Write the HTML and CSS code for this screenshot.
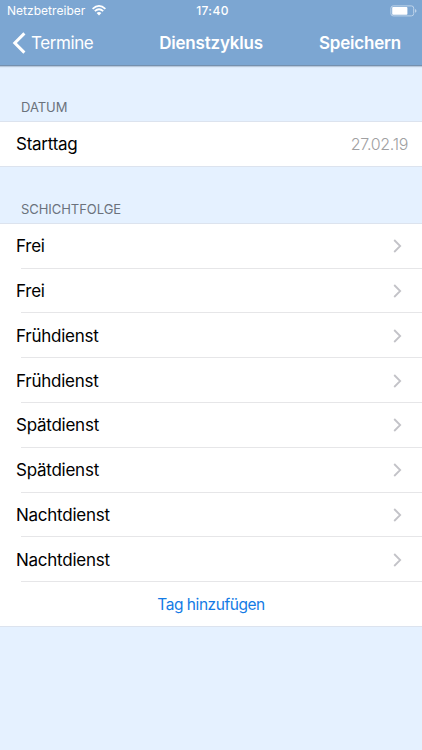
FILE: index.html
```
<!DOCTYPE html>
<html lang="de">
<head>
<meta charset="utf-8">
<title>Dienstzyklus</title>
<link rel="stylesheet" href="styles.css">
</head>
<body>
<header class="header">
  <div class="status">
    <div class="carrier"><span>Netzbetreiber</span>
      <svg class="wifi" width="14" height="11" viewBox="0 0 14 11"><path d="M.6 3.9Q7-2 13.4 3.9M2.8 6.2Q7 2.3 11.2 6.2" fill="none" stroke="#fff" stroke-width="1.7"/><path d="M4.6 8Q7 5.9 9.4 8L7 10.4z" fill="#fff"/></svg>
    </div>
    <span class="time">17:40</span>
    <svg class="battery" width="27" height="12" viewBox="0 0 27 12"><rect x=".9" y=".9" width="22.8" height="10" rx="2.3" fill="none" stroke="#bfd4ea"/><rect x="2.2" y="2.1" width="15.2" height="7.6" rx=".8" fill="#fff"/><path d="M25 4.1q1.5.5 1.5 1.8t-1.5 1.8z" fill="#bfd4ea"/></svg>
  </div>
  <nav class="nav">
    <div class="back"><svg width="14" height="22" viewBox="0 0 14 22"><path d="M12.4 1.4L2.8 11l9.6 9.6" fill="none" stroke="#fff" stroke-width="3"/></svg><span>Termine</span></div>
    <h1 class="title">Dienstzyklus</h1>
    <div class="save"><span>Speichern</span></div>
  </nav>
</header>
<main>
  <h2 class="section first">DATUM</h2>
  <div class="list">
    <div class="row single"><span>Starttag</span><span class="date">27.02.19</span></div>
  </div>
  <h2 class="section">SCHICHTFOLGE</h2>
  <div class="list">
    <div class="row"><span>Frei</span><svg class="chev" viewBox="0 0 9 14"><path d="M1.2 1l6 6-6 6"/></svg></div>
    <div class="row"><span>Frei</span><svg class="chev" viewBox="0 0 9 14"><path d="M1.2 1l6 6-6 6"/></svg></div>
    <div class="row"><span>Frühdienst</span><svg class="chev" viewBox="0 0 9 14"><path d="M1.2 1l6 6-6 6"/></svg></div>
    <div class="row"><span>Frühdienst</span><svg class="chev" viewBox="0 0 9 14"><path d="M1.2 1l6 6-6 6"/></svg></div>
    <div class="row"><span>Spätdienst</span><svg class="chev" viewBox="0 0 9 14"><path d="M1.2 1l6 6-6 6"/></svg></div>
    <div class="row"><span>Spätdienst</span><svg class="chev" viewBox="0 0 9 14"><path d="M1.2 1l6 6-6 6"/></svg></div>
    <div class="row"><span>Nachtdienst</span><svg class="chev" viewBox="0 0 9 14"><path d="M1.2 1l6 6-6 6"/></svg></div>
    <div class="row"><span>Nachtdienst</span><svg class="chev" viewBox="0 0 9 14"><path d="M1.2 1l6 6-6 6"/></svg></div>
    <div class="row add"><span>Tag hinzufügen</span></div>
  </div>
</main>
</body>
</html>
```
FILE: styles.css
```
* { box-sizing: border-box; }
body {
  margin: 0;
  height: 750px;
  overflow: hidden;
  background: #e5f1ff;
  font-family: Inter, "Liberation Sans", sans-serif;
  font-size: 17px;
  letter-spacing: -0.25px;
  color: #000;
}
svg { display: block; flex: none; }
.header {
  height: 66px;
  background: #7ca6d2;
  border-bottom: 1px solid #7590ae;
  box-shadow: 0 1px 1px #b9c8da;
  color: #fff;
}
.status, .nav {
  display: grid;
  grid-template-columns: 1fr auto 1fr;
  align-items: center;
}
.status { height: 21px; padding: 0 5px; font-size: 12px; }
.carrier { display: flex; align-items: center; gap: 7px; padding-left: 2px; letter-spacing: 0.03px; }
.time { padding-left: 3px; font-weight: 500; letter-spacing: 0.4px; }
.battery { justify-self: end; }
.nav { height: 44px; padding: 0 12px; }
.back { display: flex; align-items: center; gap: 5px; letter-spacing: -0.4px; }
.title { margin: 0; font-size: 17px; font-weight: 600; letter-spacing: -0.2px; }
.save { justify-self: end; padding-right: 9px; font-weight: 600; letter-spacing: -0.2px; }
.section {
  margin: 0;
  height: 56.4px;
  padding: 33px 0 0 21px;
  font-size: 13px;
  line-height: 18px;
  letter-spacing: -0.05px;
  font-weight: 400;
  color: #6b727c;
}
.first { height: 55px; padding-top: 32px; }
.list {
  background: #fff;
  border-top: 1px solid #dce3ee;
  border-bottom: 1px solid #dce3ee;
}
.row {
  display: flex;
  align-items: center;
  justify-content: space-between;
  height: 44.8px;
  padding: 0 14px 0 16px;
  background: linear-gradient(#e6e6e8, #e6e6e8) 21px 100% / 100% 1px no-repeat;
}
.row.single { height: 43.5px; background: none; }
.date { color: #a0a0a2; font-size: 16px; font-weight: 300; letter-spacing: -0.3px; }
.chev { width: 9px; height: 14px; margin-right: 6px; fill: none; stroke: #c3c3c8; stroke-width: 1.8; }
.row.add { justify-content: center; height: 43.8px; padding: 0; background: none; color: #147be5; font-size: 15.5px; letter-spacing: -0.45px; }
```
